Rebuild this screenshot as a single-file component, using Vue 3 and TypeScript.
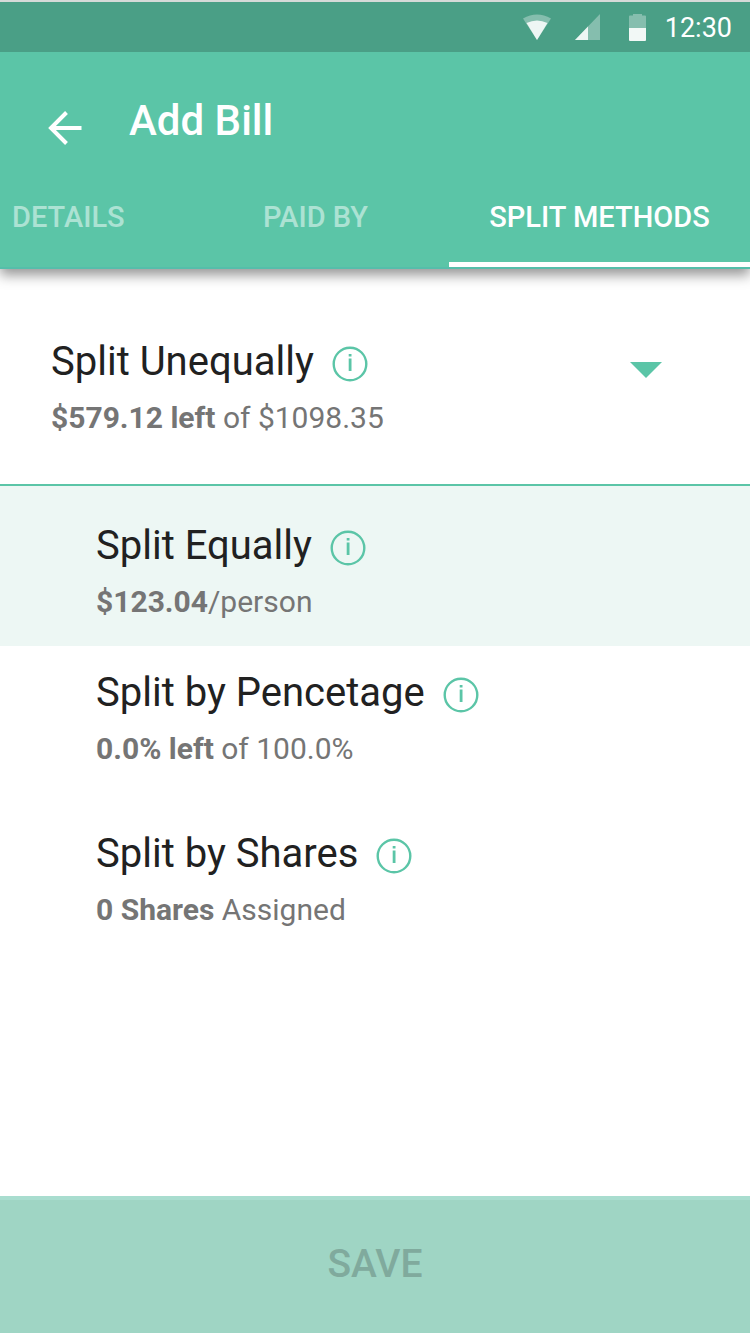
<script setup lang="ts">
import { ref } from 'vue'

interface SplitMethod {
  id: string
  name: string
  strong: string
  rest: string
}

const tabs: string[] = ['Details', 'Paid by', 'Split methods']
const activeTab = ref<number>(2)
const highlighted = ref<string>('equally')

const current: SplitMethod = {
  id: 'unequally',
  name: 'Split Unequally',
  strong: '$579.12 left',
  rest: ' of $1098.35',
}

const methods: SplitMethod[] = [
  { id: 'equally', name: 'Split Equally', strong: '$123.04', rest: '/person' },
  { id: 'percentage', name: 'Split by Pencetage', strong: '0.0% left', rest: ' of 100.0%' },
  { id: 'shares', name: 'Split by Shares', strong: '0 Shares', rest: ' Assigned' },
]
</script>

<template>
  <div class="screen">
    <div class="status">
      <svg class="wifi" width="28" height="26" viewBox="0 0 28 26" aria-hidden="true">
        <path d="M0 4.500Q14-3.500 28 4.500L14 26Z" fill="#fff" fill-opacity=".33" />
        <path d="M3.500 9Q14 4 24.500 9L14 26Z" fill="#fff" fill-opacity=".86" />
      </svg>
      <svg class="signal" width="26" height="26" viewBox="0 0 26 26" aria-hidden="true">
        <path d="M25 0V26H0Z" fill="#fff" fill-opacity=".33" />
        <path d="M13 12.500V26H0Z" fill="#fff" fill-opacity=".86" />
      </svg>
      <svg class="battery" width="17" height="27" viewBox="0 0 17 27" aria-hidden="true">
        <path d="M4 0H13V1.500H16Q17 1.500 17 2.500V14H0V2.500Q0 1.500 1 1.500H4Z" fill="#fff" fill-opacity=".33" />
        <path d="M0 14H17V26Q17 27 16 27H1Q0 27 0 26Z" fill="#fff" fill-opacity=".93" />
      </svg>
      <time class="clock">12:30</time>
    </div>

    <header class="header">
      <div class="title-row">
        <button class="back" type="button" aria-label="Back">
          <svg width="34" height="34" viewBox="0 0 34 34" aria-hidden="true">
            <path d="M18.500 1.500L3 17L18.500 32.500M2.500 17H33.500" fill="none" stroke="#fff" stroke-width="4" />
          </svg>
        </button>
        <h1 class="title">Add Bill</h1>
      </div>
      <nav class="tabs">
        <button
          v-for="(tab, index) in tabs"
          :key="tab"
          type="button"
          class="tab"
          :class="{ active: index === activeTab }"
          @click="activeTab = index"
        >
          {{ tab }}
        </button>
      </nav>
    </header>

    <main class="content">
      <section class="current">
        <div class="method-text">
          <div class="name-row">
            <h2 class="name">{{ current.name }}</h2>
            <button class="info" type="button" :aria-label="'About ' + current.name">
              <svg width="36" height="36" viewBox="0 0 36 36" aria-hidden="true">
                <circle cx="18" cy="18" r="16.300" fill="none" stroke="#5bc5a7" stroke-width="2.400" />
                <path d="M16.700 8H19.500V10.500H16.700ZM16.700 12.500H19.500V25H16.700Z" fill="#5bc5a7" />
              </svg>
            </button>
          </div>
          <p class="detail"><strong>{{ current.strong }}</strong>{{ current.rest }}</p>
        </div>
        <button class="toggle" type="button" aria-label="Choose split method" aria-expanded="true">
          <svg width="32" height="16" viewBox="0 0 32 16" aria-hidden="true">
            <path d="M0 0H32L16 16Z" fill="#5bc5a7" />
          </svg>
        </button>
      </section>

      <ul class="methods">
        <li
          v-for="method in methods"
          :key="method.id"
          class="method"
          :class="{ highlighted: method.id === highlighted }"
          @click="highlighted = method.id"
        >
          <div class="name-row">
            <h2 class="name">{{ method.name }}</h2>
            <button class="info" type="button" :aria-label="'About ' + method.name">
              <svg width="36" height="36" viewBox="0 0 36 36" aria-hidden="true">
                <circle cx="18" cy="18" r="16.300" fill="none" stroke="#5bc5a7" stroke-width="2.400" />
                <path d="M16.700 8H19.500V10.500H16.700ZM16.700 12.500H19.500V25H16.700Z" fill="#5bc5a7" />
              </svg>
            </button>
          </div>
          <p class="detail"><strong>{{ method.strong }}</strong>{{ method.rest }}</p>
        </li>
      </ul>
    </main>

    <button class="save" type="button" disabled>SAVE</button>
  </div>
</template>

<style>
body {
  margin: 0;
  background: #fff;
}
</style>

<style scoped>
.screen {
  display: flex;
  flex-direction: column;
  min-height: 100vh;
  font-family: Roboto, "Liberation Sans", sans-serif;
  color: #212121;
  background: #fff;
}

button {
  padding: 0;
  border: 0;
  background: none;
  font-family: inherit;
  cursor: pointer;
}

svg {
  display: block;
}

.status {
  position: relative;
  z-index: 1;
  display: flex;
  align-items: center;
  justify-content: flex-end;
  box-sizing: border-box;
  height: 52px;
  padding-right: 18px;
  border-top: 2px solid #d5dad8;
  background: #4a9f86;
}

.signal {
  margin-left: 24px;
}

.battery {
  margin-left: 28px;
}

.clock {
  margin-left: 19px;
  padding-top: 2px;
  font-size: 27px;
  line-height: 32px;
  color: #fff;
}

.header {
  position: relative;
  background: #5bc5a7;
  border-bottom: 2px solid #55beaa;
  box-shadow: 0 6px 12px rgba(0, 0, 0, 0.42);
}

.title-row {
  display: flex;
  align-items: center;
  gap: 47px;
  height: 112px;
  padding: 16px 48px 0;
  box-sizing: border-box;
}

.back {
  margin-top: 24px;
}

.title {
  margin: 10px 0 0;
  font-size: 42px;
  line-height: 48px;
  font-weight: 500;
  color: #fff;
}

.tabs {
  display: grid;
  grid-template-columns: 182fr 267fr 301fr;
}

.tab {
  height: 103px;
  padding: 7px 0 0;
  border-bottom: 5px solid transparent;
  font-size: 29px;
  line-height: 32px;
  font-weight: 500;
  text-transform: uppercase;
  color: #ace2d3;
}

.tab:first-child {
  padding-left: 12px;
  text-align: left;
}

.tab.active {
  color: #fff;
  border-bottom-color: #fff;
}

.content {
  flex: 1;
}

.current {
  display: flex;
  justify-content: space-between;
  align-items: flex-start;
  padding: 69px 88px 46px 51px;
  border-bottom: 2px solid #5bc5a7;
}

.name-row {
  display: flex;
  align-items: center;
  gap: 18px;
}

.name {
  margin: 0;
  font-size: 40px;
  line-height: 48px;
  font-weight: 400;
}

.info {
  margin-top: 4px;
}

.detail {
  margin: 12px 0 0;
  font-size: 30px;
  line-height: 40px;
  color: #757575;
}

.toggle {
  margin-top: 24px;
}

.methods {
  margin: 0;
  padding: 0;
  list-style: none;
}

.method {
  padding: 23px 24px 38px 96px;
}

.method.highlighted {
  padding-top: 36px;
  padding-bottom: 24px;
  background: #edf7f4;
}

.save {
  height: 137px;
  padding-bottom: 6px;
  border-top: 4px solid #a9ddcf;
  background: #9fd5c4;
  color: #80aa9d;
  font-size: 39px;
  line-height: 48px;
  font-weight: 500;
}
</style>
